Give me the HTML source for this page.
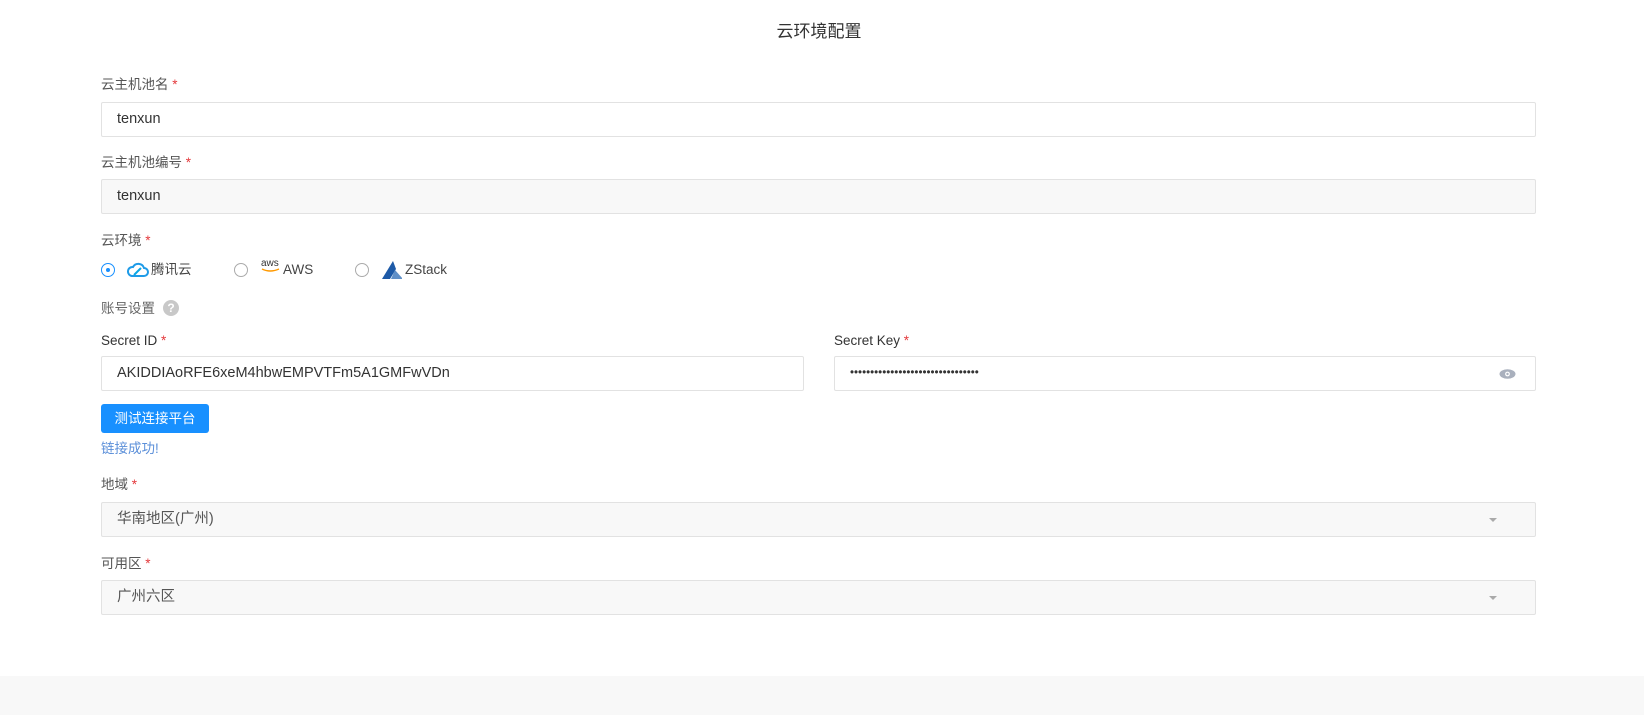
<!DOCTYPE html>
<html><head><meta charset="utf-8"><style>
*{box-sizing:border-box;margin:0;padding:0}
body{width:1644px;height:715px;background:#fff;font-family:"Liberation Sans","Noto Sans CJK SC",sans-serif;position:relative;overflow:hidden;color:#333}
.a{position:absolute}
.lbl{font-size:13.5px;color:#555;line-height:18px}
.lbl b{color:#e4393c;font-weight:normal}
.inp{position:absolute;border:1px solid #e2e2e2;border-radius:2px;height:35px;font-size:14.5px;color:#333;padding-left:15px;line-height:33px}
.gray{background:#f8f8f8}
.radio{position:absolute;width:14px;height:14px;border:1px solid #aaa;border-radius:50%}
.arrow{position:absolute;right:38px;top:15px;width:0;height:0;border-left:4px solid transparent;border-right:4px solid transparent;border-top:4px solid #aaa}
.opt{position:absolute;font-size:13.5px;color:#444;line-height:18px}
</style></head><body>
<div class="a" style="left:0;top:17px;width:1638px;text-align:center;font-size:17px;color:#333">云环境配置</div>

<div class="a lbl" style="left:101px;top:76px">云主机池名 <b>*</b></div>
<div class="inp" style="left:101px;top:102px;width:1435px">tenxun</div>

<div class="a lbl" style="left:101px;top:154px">云主机池编号 <b>*</b></div>
<div class="inp gray" style="left:101px;top:179px;width:1435px">tenxun</div>

<div class="a lbl" style="left:101px;top:232px">云环境 <b>*</b></div>
<div class="radio" style="left:101px;top:263px;border-color:#1890ff"><div style="position:absolute;left:4px;top:4px;width:4px;height:4px;border-radius:50%;background:#1890ff"></div></div>
<svg class="a" style="left:127px;top:262px" width="22" height="16" viewBox="0 0 22 16"><path d="M5 14h12a4 4 0 0 0 0-8 6 6 0 0 0-11-1 4.5 4.5 0 0 0-1 9z" fill="none" stroke="#1e9be8" stroke-width="2"/><path d="M7 13l7-7" stroke="#0aa6e6" stroke-width="2"/></svg>
<div class="opt" style="left:151px;top:261px">腾讯云</div>
<div class="radio" style="left:234px;top:263px"></div>
<div class="a" style="left:261px;top:259px;font-size:10px;color:#333;line-height:10px">aws</div>
<svg class="a" style="left:261px;top:268px" width="20" height="6"><path d="M1 1q8 4 17 0" stroke="#f90" stroke-width="1.5" fill="none"/></svg>
<div class="opt" style="left:283px;top:261px">AWS</div>
<div class="radio" style="left:355px;top:263px"></div>
<svg class="a" style="left:382px;top:261px" width="20" height="18"><path d="M11 0L0 18h8l6-10z" fill="#1d5aa7"/><path d="M13 9l-4 9h12z" fill="#5f8fc7"/></svg>
<div class="opt" style="left:405px;top:261px">ZStack</div>

<div class="a lbl" style="left:101px;top:300px;color:#666">账号设置</div>
<div class="a" style="left:163px;top:300px;width:16px;height:16px;border-radius:50%;background:#c8c8c8;color:#fff;font-size:12px;text-align:center;line-height:16px;font-weight:bold">?</div>

<div class="a lbl" style="left:101px;top:332px;color:#333">Secret ID <b>*</b></div>
<div class="inp" style="left:101px;top:356px;width:703px">AKIDDIAoRFE6xeM4hbwEMPVTFm5A1GMFwVDn</div>
<div class="a lbl" style="left:834px;top:332px;color:#333">Secret Key <b>*</b></div>
<div class="inp" style="left:834px;top:356px;width:702px;font-size:11.5px">••••••••••••••••••••••••••••••••</div>
<svg class="a" style="left:1499px;top:369px" width="17" height="10"><ellipse cx="8.5" cy="5" rx="8" ry="4.7" fill="#a9b0bd"/><circle cx="8.5" cy="5" r="2.4" fill="#fff"/><circle cx="8.5" cy="5" r="1.2" fill="#a9b0bd"/></svg>

<div class="a" style="left:101px;top:404px;width:108px;height:29px;background:#1890ff;border-radius:3px;color:#fff;font-size:13.5px;text-align:center;line-height:29px">测试连接平台</div>
<div class="a" style="left:101px;top:440px;font-size:13.5px;color:#5b8fd9;line-height:18px">链接成功!</div>

<div class="a lbl" style="left:101px;top:476px">地域 <b>*</b></div>
<div class="inp gray" style="left:101px;top:502px;width:1435px;color:#555">华南地区(广州)<div class="arrow"></div></div>

<div class="a lbl" style="left:101px;top:555px">可用区 <b>*</b></div>
<div class="inp gray" style="left:101px;top:580px;width:1435px;color:#555">广州六区<div class="arrow"></div></div>

<div class="a" style="left:0;top:676px;width:1644px;height:39px;background:#f8f8f8"></div>
</body></html>
